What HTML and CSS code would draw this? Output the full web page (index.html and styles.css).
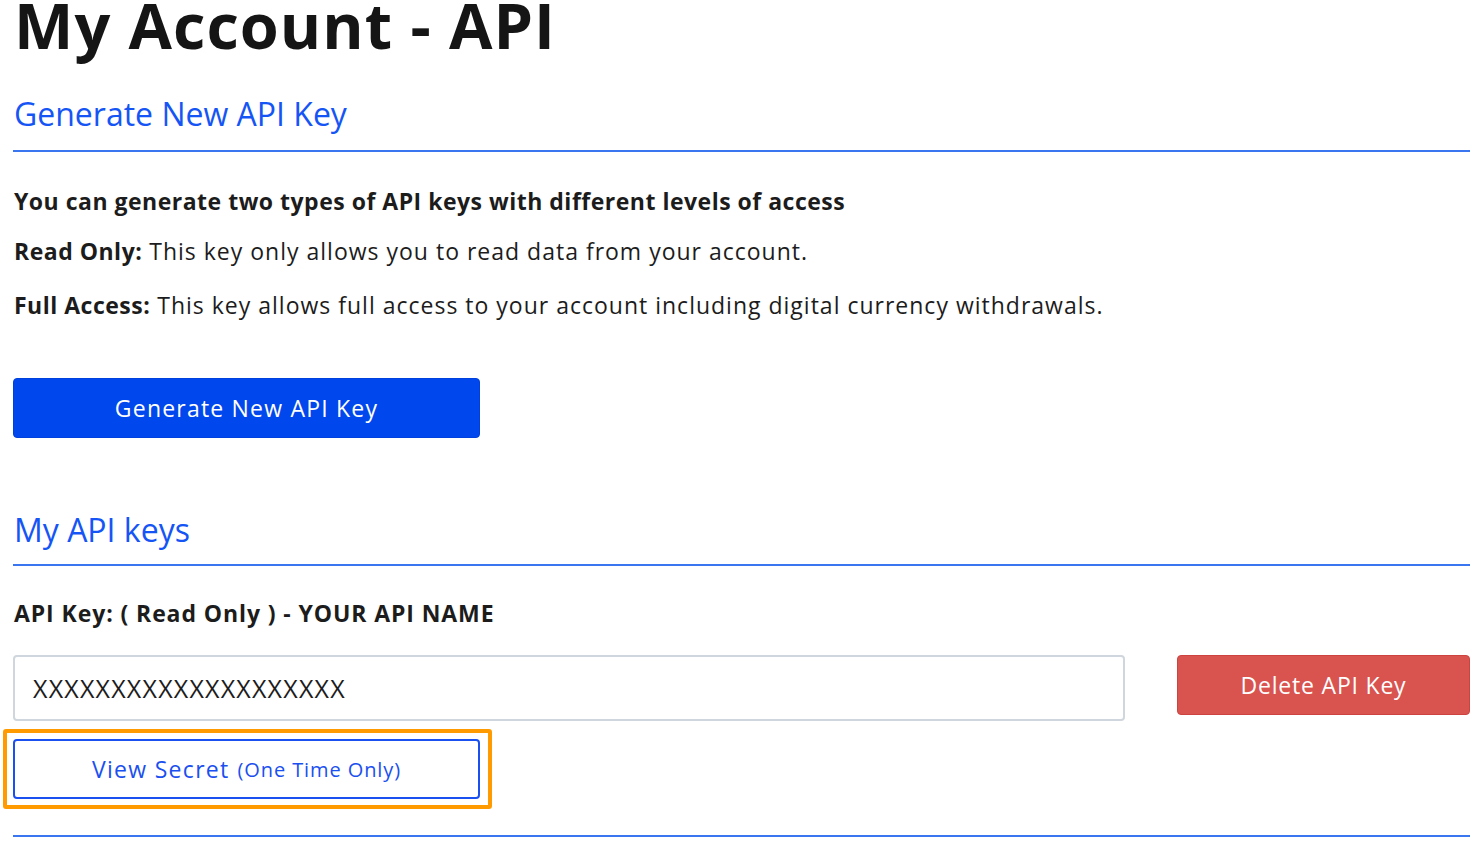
FILE: index.html
```html
<!DOCTYPE html>
<html lang="en">
<head>
    <meta charset="UTF-8">
    <meta name="viewport" content="width=device-width, initial-scale=1.0">
    <title>My Account - API</title>
    <link rel="stylesheet" href="styles.css">
</head>
<body>
    <main class="page">
        <h1 class="page-title">My Account - API</h1>

        <section class="section">
            <h2 class="section-title">Generate New API Key</h2>
            <div class="section-body">
                <p class="lead">You can generate two types of API keys with different levels of access</p>
                <p class="info"><strong>Read Only:</strong> This key only allows you to read data from your account.</p>
                <p class="info"><strong>Full Access:</strong> This key allows full access to your account including digital currency withdrawals.</p>
                <button class="btn btn-primary" type="button">Generate New API Key</button>
            </div>
        </section>

        <section class="section">
            <h2 class="section-title">My API keys</h2>
            <div class="key-item">
                <h3 class="key-name">API Key: ( Read Only ) - YOUR API NAME</h3>
                <div class="key-row">
                    <input class="key-field" type="text" value="XXXXXXXXXXXXXXXXXXXX" readonly>
                    <button class="btn btn-danger" type="button">Delete API Key</button>
                </div>
                <div class="highlight">
                    <button class="btn btn-outline" type="button">View Secret <small>(One Time Only)</small></button>
                </div>
            </div>
        </section>
    </main>
</body>
</html>
```

FILE: styles.css
```css
body {
    margin: 0;
    background-color: #fff;
    color: #1c1c1c;
    font-family: "Open Sans", Lato, sans-serif;
}

.page {
    padding: 0 2px 0 13px;
}

.page-title {
    margin: 0;
    font-size: 63px;
    line-height: 50px;
    font-weight: 700;
    letter-spacing: 1px;
    color: #151515;
    padding-left: 1px;
}

.section-title {
    margin: 0;
    padding: 0 0 0 1px;
    font-size: 32px;
    font-weight: 400;
    color: #1655f5;
    border-bottom: 2px solid #3a76ef;
}

.section:first-of-type .section-title {
    padding-top: 44px;
    line-height: 40px;
    padding-bottom: 16px;
}

.section:last-of-type .section-title {
    padding-top: 72px;
    line-height: 40px;
    padding-bottom: 14px;
}

.section-body {
    padding-top: 35px;
    padding-left: 1px;
}

.lead {
    margin: 0 0 22px;
    font-size: 23px;
    font-weight: 700;
    letter-spacing: 0.5px;
    line-height: 28px;
}

.info {
    margin: 0 0 26px;
    font-size: 23px;
    letter-spacing: 1px;
    line-height: 28px;
}

.info strong {
    font-weight: 700;
    letter-spacing: 0.5px;
}

.btn {
    display: flex;
    align-items: center;
    justify-content: center;
    height: 60px;
    border-radius: 4px;
    font-family: inherit;
    font-size: 23px;
    letter-spacing: 1px;
    cursor: pointer;
}

.btn-primary {
    width: 467px;
    margin: 59px 0 0 -1px;
    background-color: #0047ed;
    border: 1px solid #0040dc;
    color: #fff;
    letter-spacing: 1.2px;
}

.key-item {
    padding-top: 33px;
}

.key-name {
    margin: 0 0 28px;
    padding-left: 1px;
    font-size: 23px;
    line-height: 28px;
    font-weight: 700;
    letter-spacing: 0.9px;
}

.key-row {
    display: grid;
    grid-template-columns: 1fr 293px;
    column-gap: 52px;
    align-items: start;
}

.key-field {
    height: 66px;
    box-sizing: border-box;
    padding: 0 18px;
    border: 2px solid #cfd6dd;
    border-radius: 4px;
    font-family: inherit;
    font-size: 25px;
    letter-spacing: 1.2px;
    color: #1c1c1c;
    outline: none;
}

.btn-danger {
    background-color: #d9534f;
    border: 1px solid #cc4340;
    color: #fff;
    letter-spacing: 0.8px;
}

.highlight {
    width: 468px;
    margin: 8px 0 0 -10px;
    padding: 6px 7px 6px 6px;
    border: 4px solid #ff9a00;
    border-radius: 3px;
}

.btn-outline {
    width: 467px;
    background-color: #fff;
    border: 2px solid #1a4ff0;
    color: #1a4ff0;
    gap: 8px;
    letter-spacing: 1.3px;
}

.btn-outline small {
    font-size: 20px;
    letter-spacing: 0.9px;
}

.key-item::after {
    content: "";
    display: block;
    margin-top: 26px;
    border-bottom: 2px solid #3a76ef;
}
```
